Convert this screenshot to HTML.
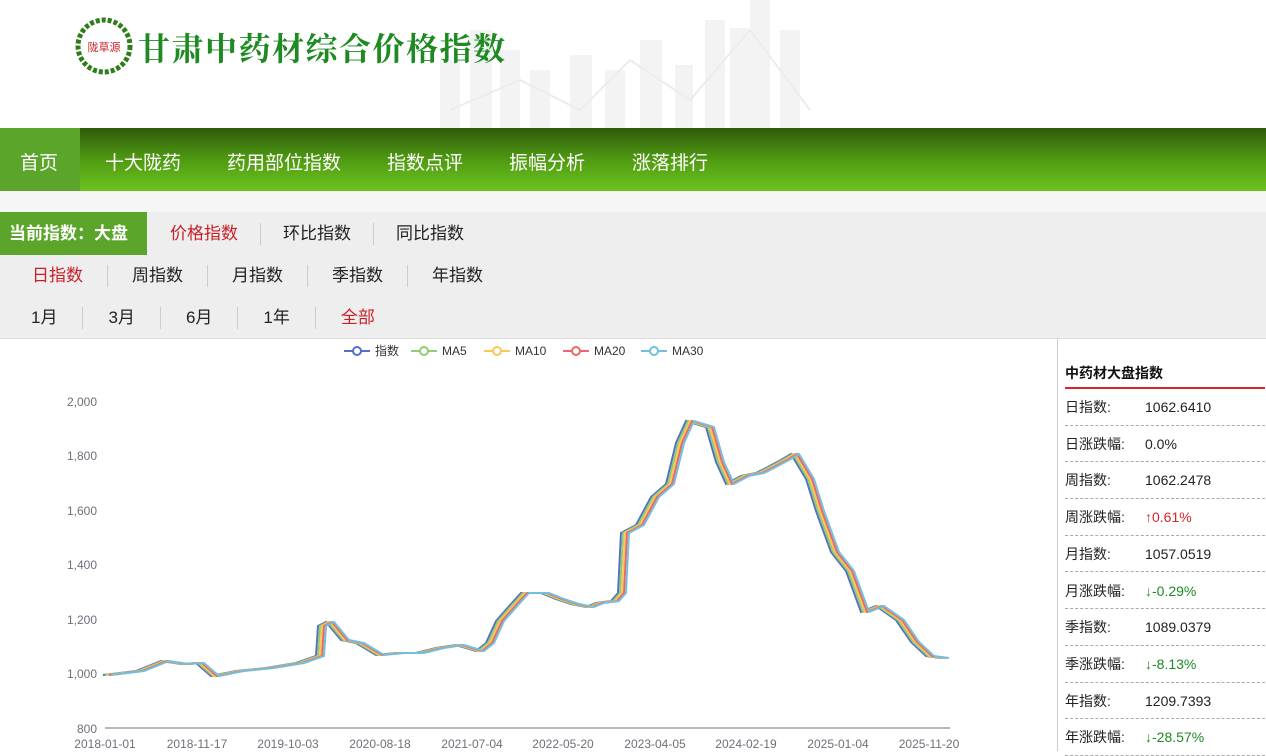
<!DOCTYPE html><html><head><meta charset="utf-8"><style>
*{margin:0;padding:0;box-sizing:border-box}
body{width:1266px;height:751px;overflow:hidden;background:#fff;font-family:"Liberation Sans","Noto Sans CJK SC",sans-serif;position:relative}
.abs{position:absolute}
.nav{top:128px;left:0;width:1266px;height:63px;background:linear-gradient(#2f5a0b,#4f9a12 50%,#6cc41e)}
.nav span{position:absolute;top:20px;color:#fff;font-size:19px}
.sub{top:212px;left:0;width:1266px;height:126px;background:#eeeeee}
.row{position:absolute;font-size:17px;color:#222;white-space:nowrap}
.row span{display:inline-block;padding:0 22px;border-left:1px solid #ccc;line-height:22px}
.row span:first-child{border-left:none}
.r2 span{padding:0 24px}.r3 span{padding:0 25px}
.red{color:#c8202a}
.side{left:1057px;top:338px;width:209px;height:413px;border-left:1px solid #ccc;border-top:1px solid #ddd}
.side div.it{position:absolute;left:7px;width:200px;height:36.7px;border-bottom:1px dashed #aaa;font-size:14px;color:#222;line-height:37px}
.it b{font-weight:normal;position:absolute;left:80px}
</style></head><body>
<svg class="abs" style="left:430px;top:0" width="390" height="128"><g fill="#f3f3f3">
<rect x="10" y="60" width="20" height="68"/><rect x="40" y="30" width="22" height="98"/><rect x="70" y="50" width="20" height="78"/><rect x="100" y="70" width="20" height="58"/><rect x="140" y="55" width="22" height="73"/><rect x="175" y="70" width="20" height="58"/><rect x="210" y="40" width="22" height="88"/><rect x="245" y="65" width="18" height="63"/><rect x="275" y="20" width="20" height="108"/><rect x="300" y="28" width="20" height="100"/><rect x="320" y="0" width="20" height="128"/><rect x="350" y="30" width="20" height="98"/></g>
<polyline points="20,110 90,80 150,110 200,60 260,100 320,30 380,110" fill="none" stroke="#ececec" stroke-width="2"/></svg>
<svg class="abs" style="left:75px;top:17px" width="58" height="58"><circle cx="29" cy="29" r="26" fill="none" stroke="#2e7d1a" stroke-width="5" stroke-dasharray="4 2"/><circle cx="29" cy="29" r="20" fill="#fff"/><text x="29" y="34" font-size="11" fill="#c8202a" text-anchor="middle" font-family="Noto Sans CJK SC">陇草源</text></svg>
<div class="abs" style="left:138px;top:24px;font-size:32px;font-weight:bold;color:#1e8a22;font-family:'Noto Serif CJK SC',serif;letter-spacing:1.5px">甘肃中药材综合价格指数</div>
<div class="abs nav"><div class="abs" style="left:0;top:0;width:80px;height:63px;background:#5aa52a"></div>
<span style="left:20px">首页</span><span style="left:105px">十大陇药</span><span style="left:227px">药用部位指数</span><span style="left:387px">指数点评</span><span style="left:509px">振幅分析</span><span style="left:632px">涨落排行</span></div>
<div class="abs" style="top:191px;left:0;width:1266px;height:21px;background:#f6f6f6"></div>
<div class="abs sub"></div>
<div class="abs" style="top:212px;left:0;width:147px;height:43px;background:#5aa52a;color:#fff;font-weight:bold;font-size:17px;line-height:43px;padding-left:9px">当前指数：大盘</div>
<div class="row" style="left:148px;top:223px"><span class="red">价格指数</span><span>环比指数</span><span>同比指数</span></div>
<div class="row r2" style="left:8px;top:265px"><span class="red">日指数</span><span>周指数</span><span>月指数</span><span>季指数</span><span>年指数</span></div>
<div class="row r3" style="left:6px;top:307px"><span>1月</span><span>3月</span><span>6月</span><span>1年</span><span class="red">全部</span></div>
<div class="abs" style="top:338px;left:0;width:1057px;height:1px;background:#ddd"></div>
<svg class="abs" style="left:0;top:339px" width="1057" height="412" font-family="Liberation Sans" font-size="12">
<g transform="translate(0,-339)">
<g fill="none" stroke-width="2"><line x1="344" y1="351" x2="370" y2="351" stroke="#5470c6"/><circle cx="357" cy="351" r="4" fill="#fff" stroke="#5470c6"/>
<line x1="411" y1="351" x2="437" y2="351" stroke="#91cc75"/><circle cx="424" cy="351" r="4" fill="#fff" stroke="#91cc75"/>
<line x1="484" y1="351" x2="510" y2="351" stroke="#fac858"/><circle cx="497" cy="351" r="4" fill="#fff" stroke="#fac858"/>
<line x1="563" y1="351" x2="589" y2="351" stroke="#ee6666"/><circle cx="576" cy="351" r="4" fill="#fff" stroke="#ee6666"/>
<line x1="641" y1="351" x2="667" y2="351" stroke="#73c0de"/><circle cx="654" cy="351" r="4" fill="#fff" stroke="#73c0de"/></g>
<g fill="#333"><text x="375" y="355">指数</text><text x="442" y="355">MA5</text><text x="515" y="355">MA10</text><text x="594" y="355">MA20</text><text x="672" y="355">MA30</text></g>
<g fill="#6e7079" text-anchor="end"><text x="97" y="406">2,000</text><text x="97" y="460">1,800</text><text x="97" y="515">1,600</text><text x="97" y="569">1,400</text><text x="97" y="624">1,200</text><text x="97" y="678">1,000</text><text x="97" y="733">800</text></g>
<line x1="105" y1="728" x2="950" y2="728" stroke="#6e7079"/>
<g fill="#6e7079" text-anchor="middle"><text x="105" y="748">2018-01-01</text><text x="197" y="748">2018-11-17</text><text x="288" y="748">2019-10-03</text><text x="380" y="748">2020-08-18</text><text x="472" y="748">2021-07-04</text><text x="563" y="748">2022-05-20</text><text x="655" y="748">2023-04-05</text><text x="746" y="748">2024-02-19</text><text x="838" y="748">2025-01-04</text><text x="929" y="748">2025-11-20</text></g>
<defs><polyline id="p" fill="none" stroke-width="2" points="107,675 140,671 165,661 185,664 200,663 215,676 240,671 270,668 300,663 320,656 322,626 330,622 345,640 360,643 380,655 400,653 420,653 440,648 460,645 480,651 490,643 500,621 515,604 525,593 545,593 560,599 575,604 590,607 600,603 615,601 622,593 625,533 640,525 655,497 670,484 680,443 690,421 710,427 720,462 730,484 745,476 760,473 770,468 785,460 795,454 810,479 820,511 835,552 850,571 865,612 880,606 900,620 915,642 930,656 945,658"/></defs>
<use href="#p" stroke="#5470c6" transform="translate(-4,0)"/><use href="#p" stroke="#91cc75" transform="translate(-2,0)"/><use href="#p" stroke="#fac858"/><use href="#p" stroke="#ee6666" transform="translate(2,0)"/><use href="#p" stroke="#73c0de" transform="translate(4,0)"/>
</g></svg>
<div class="abs side">
<div class="abs" style="left:7px;top:24px;font-size:14px;font-weight:bold;color:#111">中药材大盘指数</div>
<div class="abs" style="left:7px;top:48px;width:200px;height:2px;background:#d9252a"></div>
<div class="it" style="top:50px">日指数:<b>1062.6410</b></div>
<div class="it" style="top:86.7px">日涨跌幅:<b>0.0%</b></div>
<div class="it" style="top:123.4px">周指数:<b>1062.2478</b></div>
<div class="it" style="top:160.1px">周涨跌幅:<b style="color:#d9252a">↑0.61%</b></div>
<div class="it" style="top:196.8px">月指数:<b>1057.0519</b></div>
<div class="it" style="top:233.5px">月涨跌幅:<b style="color:#1e8a22">↓-0.29%</b></div>
<div class="it" style="top:270.2px">季指数:<b>1089.0379</b></div>
<div class="it" style="top:306.9px">季涨跌幅:<b style="color:#1e8a22">↓-8.13%</b></div>
<div class="it" style="top:343.6px">年指数:<b>1209.7393</b></div>
<div class="it" style="top:380.3px">年涨跌幅:<b style="color:#1e8a22">↓-28.57%</b></div>
</div>
</body></html>
